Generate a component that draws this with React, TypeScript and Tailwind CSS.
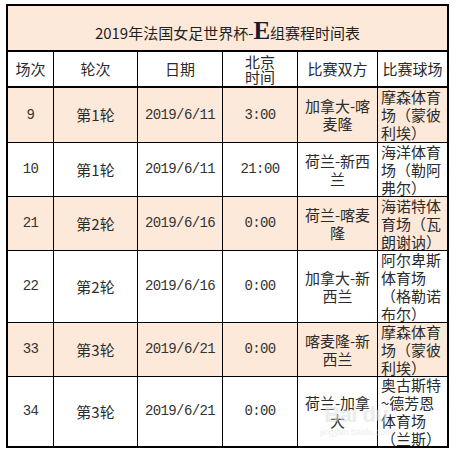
// 2019 Women's World Cup group E schedule table (Excel-style sheet snapshot).

const CJK = { fontFamily: '"Noto Sans CJK SC", "Noto Sans", sans-serif' };
const MONO = { fontFamily: '"Liberation Mono", "DejaVu Sans Mono", monospace' };

interface Match {
  no: string;
  round: string;
  date: string;
  time: string;
  teams: string;
  venue: string;
  height: string;
  shaded: boolean;
}

const MATCHES: Match[] = [
  { no: "9", round: "第1轮", date: "2019/6/11", time: "3:00", teams: "加拿大-喀麦隆", venue: "摩森体育场（蒙彼利埃）", height: "h-[55px]", shaded: true },
  { no: "10", round: "第1轮", date: "2019/6/11", time: "21:00", teams: "荷兰-新西兰", venue: "海洋体育场（勒阿弗尔）", height: "h-[54px]", shaded: false },
  { no: "21", round: "第2轮", date: "2019/6/16", time: "0:00", teams: "荷兰-喀麦隆", venue: "海诺特体育场（瓦朗谢讷）", height: "h-[54px]", shaded: true },
  { no: "22", round: "第2轮", date: "2019/6/16", time: "0:00", teams: "加拿大-新西兰", venue: "阿尔卑斯体育场（格勒诺布尔）", height: "h-[72px]", shaded: false },
  { no: "33", round: "第3轮", date: "2019/6/21", time: "0:00", teams: "喀麦隆-新西兰", venue: "摩森体育场（蒙彼利埃）", height: "h-[54px]", shaded: true },
  { no: "34", round: "第3轮", date: "2019/6/21", time: "0:00", teams: "荷兰-加拿大", venue: "奥古斯特~德芳恩体育场（兰斯）", height: "h-[69px]", shaded: false },
];

const HEADERS = ["场次", "轮次", "日期", "", "比赛双方", "比赛球场"];

function Cell({
  children,
  last,
  bottom,
  mono,
  left,
}: {
  children: React.ReactNode;
  last?: boolean;
  bottom?: boolean;
  mono?: boolean;
  left?: boolean;
}) {
  return (
    <div
      className={
        "flex items-center overflow-hidden border-black " +
        (last ? "" : "border-r ") +
        (bottom ? "" : "border-b ") +
        (left ? "justify-start pl-[3px] pr-[1px] text-left " : "justify-center px-[2px] text-center ") +
        (mono ? "text-[14px] tracking-[-0.6px] text-[#333]" : "text-[15px] leading-[18px] text-[#2b2b2b]")
      }
      style={mono ? MONO : CJK}
    >
      <div className="w-full">{children}</div>
    </div>
  );
}

export default function App() {
  return (
    <div className="h-[457px] w-[459px] bg-white pl-[6px] pt-[4px]">
      <div className="relative w-[443px] border-2 border-black">
        {/* title */}
        <div
          className="flex h-[46px] items-start justify-center border-b-2 border-black bg-[#fde9d9] pt-[16px] text-[15px] leading-[18px] text-[#1f1f1f]"
          style={CJK}
        >
          <span>
            2019年法国女足世界杯-
            <span
              className="inline-block align-baseline text-[25px] font-bold leading-[18px] text-[#1a1a2e]"
              style={{ fontFamily: '"Liberation Serif", serif' }}
            >
              E
            </span>
            组赛程时间表
          </span>
        </div>

        {/* header */}
        <div className="grid h-[36px] grid-cols-[46px_84px_85px_75px_80px_69px] border-b-2 border-black bg-white">
          {HEADERS.map((h, i) => (
            <div
              key={i}
              className={
                "flex items-center justify-center border-black text-center text-[15px] text-[#2b2b2b] " +
                (i < 5 ? "border-r" : "")
              }
              style={CJK}
            >
              {i === 3 ? (
                <span className="leading-[15px]">
                  北京
                  <br />
                  时间
                </span>
              ) : (
                h
              )}
            </div>
          ))}
        </div>

        {/* match rows */}
        {MATCHES.map((m, r) => {
          const bottom = r === MATCHES.length - 1;
          return (
            <div
              key={m.no}
              className={
                "grid grid-cols-[46px_84px_85px_75px_80px_69px] " +
                m.height +
                (m.shaded ? " bg-[#fde9d9]" : " bg-white")
              }
            >
              <Cell mono bottom={bottom}>{m.no}</Cell>
              <Cell bottom={bottom}>{m.round}</Cell>
              <Cell mono bottom={bottom}>{m.date}</Cell>
              <Cell mono bottom={bottom}>{m.time}</Cell>
              <Cell bottom={bottom}>{m.teams}</Cell>
              <Cell left last bottom={bottom}>{m.venue}</Cell>
            </div>
          );
        })}

        {/* faint watermark */}
        <div
          className="pointer-events-none absolute left-[312px] top-[398px] flex flex-col items-center text-[#e2e2e2] opacity-60"
          style={{ fontFamily: '"Liberation Sans", sans-serif' }}
        >
          <span className="text-[22px] font-bold leading-[22px] tracking-tight">Bai du</span>
          <span className="text-[9px] leading-[12px]">jingyan.baidu.com</span>
        </div>
      </div>
    </div>
  );
}
